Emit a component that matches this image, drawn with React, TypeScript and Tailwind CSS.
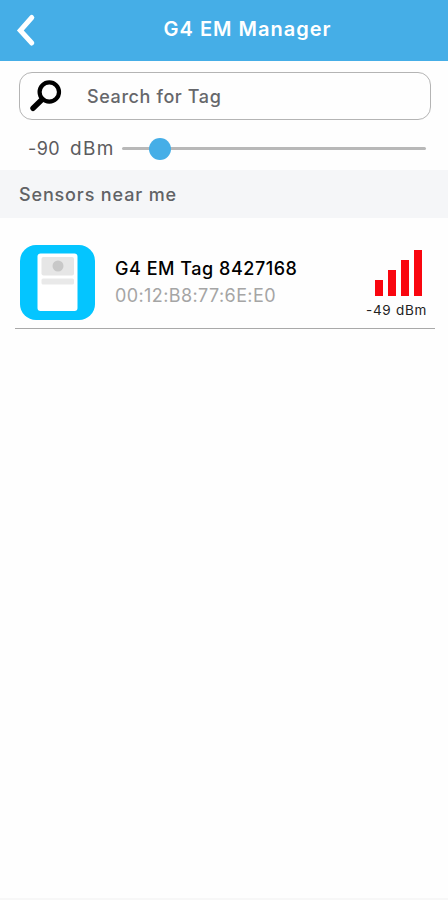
import React from "react";

type Sensor = {
  name: string;
  mac: string;
  rssi: number;
};

const sensors: Sensor[] = [{ name: "G4 EM Tag 8427168", mac: "00:12:B8:77:6E:E0", rssi: -49 }];

const Header = () => (
  <header className="relative flex h-[61px] items-center justify-center bg-[#45aee7]">
    <button aria-label="Back" className="absolute left-[14px] top-[12px]">
      <svg width="24" height="36" viewBox="0 0 24 36" fill="none">
        <path d="M17.8 5.5 L6.3 18.5 L17.8 31" stroke="#fff" strokeWidth="5" strokeLinecap="round" strokeLinejoin="miter" />
      </svg>
    </button>
    <h1 className="-mt-[3px] ml-[47px] whitespace-nowrap text-[20px] font-semibold tracking-[1px] text-white">
      G4 EM Manager
    </h1>
  </header>
);

const SearchBar = () => (
  <div className="ml-[19px] mt-[11px] flex h-[48px] w-[412px] items-center rounded-[13px] border-[1.5px] border-[#b4b4b4]">
    <svg className="ml-[9px] shrink-0" width="34" height="34" viewBox="0 0 34 34" fill="none" stroke="#000">
      <circle cx="20.3" cy="13" r="9.7" strokeWidth="4.2" />
      <path d="M13 20.5 L4 29.3" strokeWidth="5.4" strokeLinecap="round" />
    </svg>
    <span className="ml-[24px] whitespace-nowrap text-[18px] font-medium tracking-[0.6px] text-[#66676b]">
      Search for Tag
    </span>
  </div>
);

const RssiSlider = () => (
  <div className="flex h-[50px] items-center pl-[28px] pt-[7px]">
    <div className="flex w-[94px] text-[18px] text-[#5c5c5e]">
      <span className="w-[42px] tracking-[0.4px]">-90</span>
      <span className="text-[19px] leading-[27px] tracking-[1.4px]">dBm</span>
    </div>
    <div className="relative h-[3px] w-[304px] rounded-full bg-[#b8b8b8]">
      <div className="absolute left-[27px] top-[-9px] h-[22px] w-[22px] rounded-full bg-[#45aee7]" />
    </div>
  </div>
);

const TagIcon = () => (
  <svg className="shrink-0" width="75" height="75" viewBox="0 0 75 75">
    <rect width="75" height="75" rx="16" fill="#04c5ff" />
    <rect x="17.5" y="8.5" width="40" height="57.5" rx="3" fill="#fff" />
    <rect x="21.5" y="12" width="32.5" height="18.5" rx="2" fill="#e6e6e6" />
    <circle cx="38" cy="21" r="5.5" fill="#c8c8c8" />
    <rect x="21.5" y="33.5" width="32.5" height="6" rx="1.5" fill="#e9e9e9" />
  </svg>
);

const SignalBars = () => (
  <div className="flex h-[47px] items-end gap-[5px]">
    <div className="h-[16px] w-[8px] bg-[#f9060f]" />
    <div className="h-[26px] w-[8px] bg-[#f9060f]" />
    <div className="h-[36px] w-[8px] bg-[#f9060f]" />
    <div className="h-[46px] w-[8px] bg-[#f9060f]" />
  </div>
);

const SensorRow = ({ sensor }: { sensor: Sensor }) => (
  <div className="ml-[15px] flex h-[111px] w-[420px] border-b border-[#a9a9a9] pl-[5px] pt-[27px]">
    <TagIcon />
    <div className="ml-[20px] w-[250px] whitespace-nowrap pt-[10px] leading-[27px]">
      <p className="text-[18px] font-medium tracking-[0.53px] text-black">{sensor.name}</p>
      <p className="text-[18px] tracking-[0.4px] text-[#a5a5a5]">{sensor.mac}</p>
    </div>
    <div className="flex w-[63px] flex-col items-center pt-[4px]">
      <div className="ml-[4px]">
        <SignalBars />
      </div>
      <span className="mt-[5px] whitespace-nowrap text-[13.5px] leading-[18px] tracking-[0.7px] text-[#222]">
        {sensor.rssi} dBm
      </span>
    </div>
  </div>
);

const App = () => {
  return (
    <div className="flex h-[900px] w-[448px] flex-col overflow-hidden border-b-2 border-[#f7f7f7] bg-[#fefefe] font-['Inter',sans-serif]">
      <Header />
      <SearchBar />
      <RssiSlider />
      <div className="flex h-[48px] items-center bg-[#f5f6f8] pl-[19px] text-[18px] font-medium tracking-[0.85px] text-[#616265]">
        Sensors near me
      </div>
      {sensors.map((sensor) => (
        <SensorRow key={sensor.mac} sensor={sensor} />
      ))}
    </div>
  );
};

export default App;
